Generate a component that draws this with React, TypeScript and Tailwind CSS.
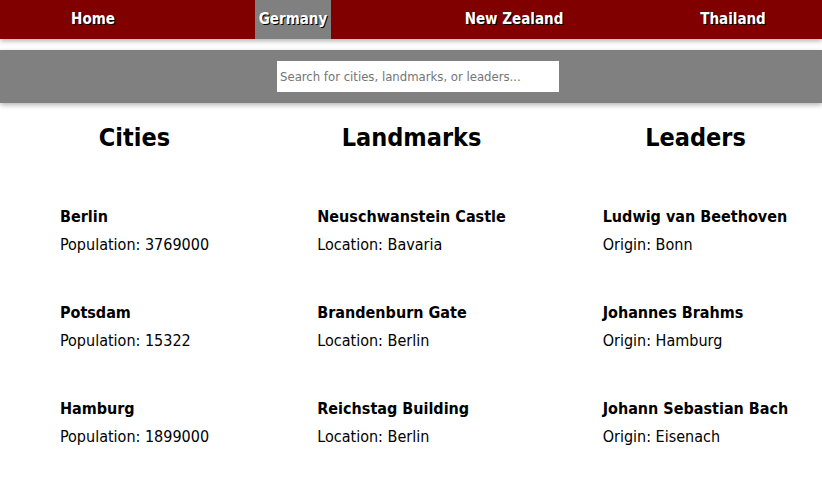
import React from 'react';

const font = { fontFamily: '"DejaVu Sans", sans-serif', fontStretch: 'condensed' as const };

const cities = [
  { name: 'Berlin', detail: 'Population: 3769000' },
  { name: 'Potsdam', detail: 'Population: 15322' },
  { name: 'Hamburg', detail: 'Population: 1899000' },
];

const landmarks = [
  { name: 'Neuschwanstein Castle', detail: 'Location: Bavaria' },
  { name: 'Brandenburn Gate', detail: 'Location: Berlin' },
  { name: 'Reichstag Building', detail: 'Location: Berlin' },
];

const leaders = [
  { name: 'Ludwig van Beethoven', detail: 'Origin: Bonn' },
  { name: 'Johannes Brahms', detail: 'Origin: Hamburg' },
  { name: 'Johann Sebastian Bach', detail: 'Origin: Eisenach' },
];

const Column: React.FC<{ title: string; items: { name: string; detail: string }[]; className?: string }> = ({
  title,
  items,
  className = '',
}) => (
  <div className={`flex justify-center ${className}`}>
    <div className="flex flex-col">
      <h2 className="text-center text-[25px] font-bold leading-[34px] text-black">{title}</h2>
      <ul className="mt-[48px] flex flex-col gap-[40px]">
        {items.map((item) => (
          <li key={item.name} className="text-[16px] leading-[28px] text-black">
            <div className="font-bold">{item.name}</div>
            <div>{item.detail}</div>
          </li>
        ))}
      </ul>
    </div>
  </div>
);

export default function App() {
  return (
    <div className="min-h-[482px] w-[822px] bg-white font-stretch-condensed" style={font}>
      {/* Nav */}
      <nav className="flex h-[39px] items-stretch bg-[#800000] text-[15px] font-bold text-white shadow-[0_2px_5px_rgba(0,0,0,0.3)] [text-shadow:1px_1px_0_#000]">
        <a className="flex w-[186px] items-center justify-center">Home</a>
        <a className="ml-[69px] flex w-[76px] items-center justify-center bg-[#808080]">Germany</a>
        <a className="flex w-[366px] items-center justify-center">New Zealand</a>
        <a className="flex w-[72px] items-center justify-center">Thailand</a>
      </nav>

      {/* Search bar */}
      <div className="mt-[11px] flex h-[53px] items-center justify-center bg-[#808080] shadow-[0_2px_5px_rgba(0,0,0,0.3)]">
        <input
          type="text"
          placeholder="Search for cities, landmarks, or leaders..."
          className="ml-[14px] h-[31px] w-[282px] bg-white px-[3px] text-[13px] text-black outline-none placeholder:text-[#757575]"
          style={font}
        />
      </div>

      {/* Columns */}
      <div className="mt-[18px] grid grid-cols-[269px_285px_1fr]">
        <Column title="Cities" items={cities} />
        <Column title="Landmarks" items={landmarks} />
        <Column title="Leaders" items={leaders} className="pl-[15px]" />
      </div>
    </div>
  );
}
